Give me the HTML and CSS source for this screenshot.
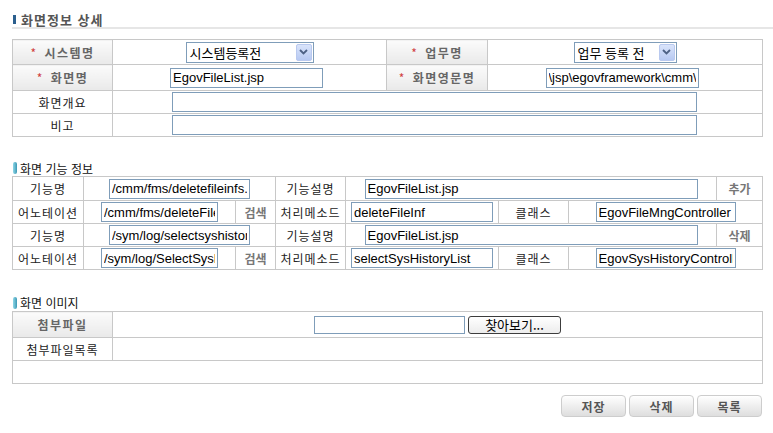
FILE: index.html
```html
<!DOCTYPE html>
<html lang="ko">
<head>
  <meta charset="UTF-8" />
  <title>화면정보 상세</title>
  <link rel="stylesheet" href="styles.css">
</head>
<body>

<div class="wrap">
  <h2 class="page-title"><span class="title-bar"></span>화면정보 상세</h2>

  <table class="form-table info-table">
    <colgroup>
      <col style="width:100px"><col style="width:274px"><col style="width:101px"><col style="width:275px">
    </colgroup>
    <tr class="row-h25">
      <th><span class="req">*</span> 시스템명</th>
      <td class="center">
        <div class="fake-select sel-sys"><span class="sel-text">시스템등록전</span><span class="sel-arrow"><svg width="9" height="6" viewBox="0 0 9 6"><path d="M1 1 L4.5 4.5 L8 1" fill="none" stroke="#4d6185" stroke-width="1.8"/></svg></span></div>
      </td>
      <th><span class="req">*</span> 업무명</th>
      <td class="center">
        <div class="fake-select sel-job"><span class="sel-text">업무 등록 전</span><span class="sel-arrow"><svg width="9" height="6" viewBox="0 0 9 6"><path d="M1 1 L4.5 4.5 L8 1" fill="none" stroke="#4d6185" stroke-width="1.8"/></svg></span></div>
      </td>
    </tr>
    <tr class="row-h26">
      <th><span class="req">*</span> 화면명</th>
      <td class="center"><input class="txt w153" type="text" value="EgovFileList.jsp"></td>
      <th><span class="req">*</span> 화면영문명</th>
      <td class="center"><input class="txt w153" type="text" value="\jsp\egovframework\cmm\fms\EgovFileList.jsp"></td>
    </tr>
    <tr class="row-h23">
      <td class="label">화면개요</td>
      <td colspan="3" class="center"><input class="txt w525" type="text" value=""></td>
    </tr>
    <tr class="row-h23">
      <td class="label">비고</td>
      <td colspan="3" class="center"><input class="txt w525" type="text" value=""></td>
    </tr>
  </table>

  <div class="sub-title sub-func"><span class="pill"></span>화면 기능 정보</div>

  <table class="form-table func-table">
    <colgroup>
      <col style="width:71px"><col style="width:152px"><col style="width:40px"><col style="width:70px">
      <col style="width:153px"><col style="width:70px"><col style="width:148px"><col style="width:46px">
    </colgroup>
    <tr class="row-h24">
      <td class="label">기능명</td>
      <td colspan="2" class="center"><input class="txt w141" type="text" value="/cmm/fms/deletefileinfs.do"></td>
      <td class="label">기능설명</td>
      <td colspan="3" class="center"><input class="txt w333" type="text" value="EgovFileList.jsp"></td>
      <td class="link">추가</td>
    </tr>
    <tr class="row-h23">
      <td class="label">어노테이션</td>
      <td class="center"><input class="txt w117" type="text" value="/cmm/fms/deleteFileInfs.do"></td>
      <td class="link">검색</td>
      <td class="label">처리메소드</td>
      <td class="center"><input class="txt w142" type="text" value="deleteFileInf"></td>
      <td class="label">클래스</td>
      <td colspan="2" class="center"><input class="txt w140" type="text" value="EgovFileMngController"></td>
    </tr>
    <tr class="row-h23">
      <td class="label">기능명</td>
      <td colspan="2" class="center"><input class="txt w141" type="text" value="/sym/log/selectsyshistory.do"></td>
      <td class="label">기능설명</td>
      <td colspan="3" class="center"><input class="txt w333" type="text" value="EgovFileList.jsp"></td>
      <td class="link">삭제</td>
    </tr>
    <tr class="row-h23">
      <td class="label">어노테이션</td>
      <td class="center"><input class="txt w117" type="text" value="/sym/log/SelectSysHistory.do"></td>
      <td class="link">검색</td>
      <td class="label">처리메소드</td>
      <td class="center"><input class="txt w142" type="text" value="selectSysHistoryList"></td>
      <td class="label">클래스</td>
      <td colspan="2" class="center"><input class="txt w140" type="text" value="EgovSysHistoryController"></td>
    </tr>
  </table>

  <div class="sub-title sub-image"><span class="pill"></span>화면 이미지</div>

  <table class="form-table file-table">
    <colgroup>
      <col style="width:100px"><col style="width:650px">
    </colgroup>
    <tr class="row-h26">
      <th>첨부파일</th>
      <td class="center">
        <div class="file-box"><span class="file-path"></span><button class="file-btn" type="button">찾아보기...</button></div>
      </td>
    </tr>
    <tr class="row-h23">
      <td class="label">첨부파일목록</td>
      <td></td>
    </tr>
    <tr class="row-h23">
      <td colspan="2"></td>
    </tr>
  </table>

  <div class="btn-row">
    <button class="btn" type="button">저장</button>
    <button class="btn" type="button">삭제</button>
    <button class="btn" type="button">목록</button>
  </div>
</div>

</body>
</html>
```

FILE: styles.css
```css
body {
  margin: 0;
  background: #fff;
  font-family: "Noto Sans CJK KR", "Liberation Sans", sans-serif;
  font-size: 12px;
  color: #222;
}

.wrap {
  width: 750px;
  padding: 0 0 0 12px;
}

/* 제목 */
.page-title {
  margin: 0;
  width: 761px;
  height: 29px;
  box-sizing: border-box;
  padding: 12px 0 0 8px;
  border-bottom: 2px solid #e6e6e6;
  font-size: 13px;
  line-height: 14px;
  font-weight: bold;
  color: #555;
  letter-spacing: 1px;
  display: flex;
  align-items: center;
}

.title-bar {
  display: inline-block;
  width: 3px;
  height: 9px;
  background: #2b5f8e;
  margin: 0 5px 0 -7px;
}

/* 공통 테이블 */
.form-table {
  width: 750px;
  border-collapse: collapse;
  table-layout: fixed;
}

.form-table th,
.form-table td {
  border: 1px solid #c8c8c8;
  padding: 0;
  white-space: nowrap;
  overflow: hidden;
}

.form-table th {
  background: linear-gradient(#fbfbfb, #e9e9e9);
  color: #666;
  font-weight: bold;
  letter-spacing: 1.5px;
  text-align: center;
}

.req {
  color: #d04040;
  font-weight: normal;
  margin-right: 2px;
}

.label {
  text-align: center;
  color: #222;
  letter-spacing: 1px;
}

.link {
  text-align: center;
  color: #777;
  font-weight: bold;
}

.center {
  text-align: center;
}

.row-h23 { height: 23px; }
.row-h24 { height: 24px; }
.row-h25 { height: 25px; }
.row-h26 { height: 26px; }

.info-table {
  margin-top: 10px;
}

/* 입력 상자 */
.txt {
  box-sizing: border-box;
  height: 20px;
  border: 1px solid #7f9db9;
  padding: 0 2px;
  font-family: "Liberation Sans", sans-serif;
  font-size: 13px;
  color: #000;
  background: #fff;
  vertical-align: middle;
  margin: 0 6px 0 0;
}

.w117 { width: 117px; }
.w140 { width: 140px; }
.w141 { width: 141px; }
.w142 { width: 142px; }
.w153 { width: 153px; }
.w333 { width: 333px; }
.w525 { width: 525px; }

.func-table .txt { height: 20px; margin: 0; }

/* 선택 상자 */
.fake-select {
  display: inline-flex;
  align-items: center;
  justify-content: space-between;
  box-sizing: border-box;
  height: 21px;
  border: 1px solid #7f9db9;
  padding: 0 1px 0 3px;
  background: #fff;
  vertical-align: middle;
  font-size: 13px;
  color: #000;
  text-align: left;
}

.sel-sys { width: 128px; }
.sel-job { width: 103px; }

.sel-arrow {
  display: flex;
  justify-content: center;
  align-items: center;
  width: 16px;
  height: 17px;
  box-sizing: border-box;
  border: 1px solid #b9c9ef;
  border-radius: 2px;
  background: linear-gradient(#d9e4fb, #b7c9f2);
}

/* 소제목 */
.sub-title {
  display: flex;
  align-items: center;
  height: 16px;
  font-size: 12px;
  color: #111;
}

.sub-func { margin-top: 23px; }
.sub-image { margin-top: 24px; height: 17px; }

.pill {
  display: inline-block;
  width: 4px;
  height: 12px;
  border-radius: 2px;
  background: linear-gradient(to right, #8fd8e8, #3c98b4);
  margin: 0 3px 0 1px;
}

/* 파일 */
.file-box {
  display: inline-flex;
  align-items: center;
  gap: 3px;
  vertical-align: middle;
}

.file-path {
  display: inline-block;
  box-sizing: border-box;
  width: 151px;
  height: 18px;
  border: 1px solid #7f9db9;
  background: #fff;
}

.file-btn {
  box-sizing: border-box;
  width: 93px;
  height: 18px;
  padding: 0;
  border: 1px solid #3c3c3c;
  border-radius: 3px;
  background: linear-gradient(#ffffff, #ececec);
  font-family: "Noto Sans CJK KR", sans-serif;
  font-size: 13px;
  line-height: 14px;
  color: #000;
}

/* 하단 버튼 */
.btn-row {
  display: flex;
  justify-content: flex-end;
  gap: 3px;
  margin-top: 11px;
}

.btn {
  width: 65px;
  height: 22px;
  border: 1px solid #cdcdcd;
  border-radius: 4px;
  background: linear-gradient(#ffffff, #dedede);
  font-family: "Noto Sans CJK KR", sans-serif;
  font-size: 12px;
  font-weight: bold;
  color: #555;
  letter-spacing: 1px;
  padding: 0;
}
```
